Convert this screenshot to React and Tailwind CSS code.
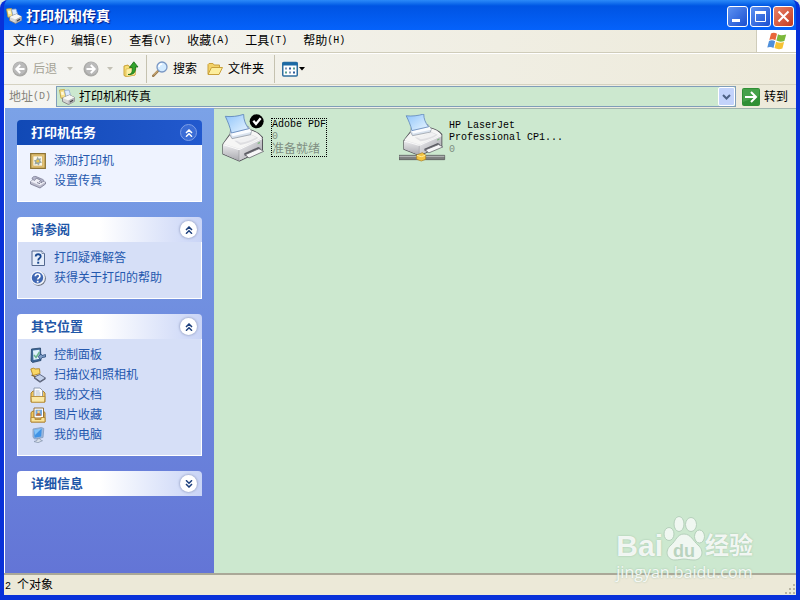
import { useState } from "react";

const latin = "font-['Liberation_Mono',monospace] text-[10px]";

const menus = [
  { label: "文件", key: "F" },
  { label: "编辑", key: "E" },
  { label: "查看", key: "V" },
  { label: "收藏", key: "A" },
  { label: "工具", key: "T" },
  { label: "帮助", key: "H" },
];

/* ---------- small icons ---------- */

const PrintersIcon = () => (
  <svg viewBox="0 0 16 16" className="h-4 w-4 shrink-0">
    <path d="M.5 1l5-.5 1.500 8-5 .8z" fill="#f6e08a" stroke="#b99a3c" strokeWidth=".8" />
    <path d="M2 3l2.500-.3.5 3-2.500.3z" fill="#fff8dc" />
    <path d="M5.500 1.500L10 1l1.700 5.500-4.700 1z" fill="#dcebff" stroke="#8aa4cc" strokeWidth=".7" />
    <path d="M3.500 9l7-3 5 2.500v3.800L9.500 15.500l-6-3z" fill="#d6d6d4" stroke="#77777b" strokeWidth=".8" />
    <path d="M3.500 9l6 2.500 6-3-5-2.500z" fill="#f8f8f5" />
    <path d="M9.500 11.500v4l6-3.300V8.500z" fill="#b0b0b5" />
    <path d="M11 13l3-1.700" stroke="#444" strokeWidth="1.100" />
  </svg>
);

const RoundArrow = ({ flip }) => (
  <svg viewBox="0 0 16 16" className={flip ? "h-4 w-4 -scale-x-100" : "h-4 w-4"}>
    <circle cx="8" cy="8" r="7.500" fill="#a9a9a6" />
    <circle cx="7.600" cy="7.400" r="6.300" fill="#bababa" />
    <path d="M12.500 8H5M8.200 4L4.300 8l3.900 4" fill="none" stroke="#fff" strokeWidth="2" />
  </svg>
);

const Triangle = ({ color }) => (
  <svg viewBox="0 0 6 4" className="h-1 w-1.5">
    <path d="M0 0h6L3 3.500z" fill={color} />
  </svg>
);

const UpIcon = () => (
  <svg viewBox="0 0 16 16" className="h-4 w-4">
    <path d="M1 5l4-1 1 1.500 6-.5v9l-9 1.500-2-1z" fill="#f8df76" stroke="#c49a2a" strokeWidth=".9" />
    <path d="M3 8l10-1.500-1 7.500-9 1.500z" fill="#fdf0a4" stroke="#d1aa3c" strokeWidth=".6" />
    <path d="M5 13.500c4 0 4.500-3 4.200-7H6.500L10.800.8 15 6h-2.500c.3 5-1.500 8-7.500 7.500z" fill="#32a32c" stroke="#146b16" strokeWidth=".8" />
  </svg>
);

const SearchIcon = () => (
  <svg viewBox="0 0 16 16" className="h-4 w-4">
    <path d="M6.500 9.500L1.200 14.800" stroke="#9a7a4c" strokeWidth="2.400" strokeLinecap="round" />
    <path d="M5.800 9.800L1.500 14" stroke="#e6c58b" strokeWidth=".9" />
    <circle cx="10" cy="6" r="5" fill="#d3ebff" stroke="#7b98c4" strokeWidth="1.300" />
    <path d="M7 6c0-2 1.400-3 3.200-3" fill="none" stroke="#fff" strokeWidth="1.500" />
  </svg>
);

const FolderIcon = () => (
  <svg viewBox="0 0 16 16" className="h-4 w-4">
    <path d="M1 13V3.500L2 2.500h4l1.200 1.500H12.500V7" fill="#f3d268" stroke="#c9a03a" />
    <path d="M4.500 6.500H15.500L12 13.500H1z" fill="#fdee9c" stroke="#c9a03a" />
  </svg>
);

const ViewsIcon = () => (
  <svg viewBox="0 0 16 16" className="h-4 w-4">
    <rect x=".75" y="1.500" width="14.500" height="13.500" rx="1" fill="#fff" stroke="#2f6f9f" strokeWidth="1.500" />
    <path d="M.5 1.500h15v3H.5z" fill="#1b6aa5" />
    <path d="M3 6.500h2v2H3zM7 10.500h2v2H7z" fill="#7c93b5" />
    <path d="M7 6.500h2v2H7zM11 10.500h2v2h-2z" fill="#2f5f9e" />
    <path d="M11 6.500h2v2h-2zM3 10.500h2v2H3z" fill="#57a08e" />
  </svg>
);

const WindowsFlag = () => (
  <svg viewBox="0 0 20 18" className="h-[18px] w-5">
    <path d="M4 1.500C6 .4 8 .6 10 1.800L8.400 8.300C6.500 7.200 4.500 7 2.300 8z" fill="#e8663a" />
    <path d="M11 2.200c2 1.200 4.500 1.300 8.200.2L17.400 9c-3 1-5.500.9-8-.4z" fill="#7cb83c" />
    <path d="M2 9c2.200-1 4.200-.8 6.100.3L6.500 16C4.600 14.800 2.600 14.600.3 15.500z" fill="#4f8fdb" />
    <path d="M9.100 9.700c2.300 1.200 5 1.300 8 .4L15.400 16.600c-3 1-5.500.7-7.900-.5z" fill="#f6c234" />
  </svg>
);

const Chevrons = ({ down }) => (
  <svg viewBox="0 0 8 8" className={down ? "h-2 w-2 rotate-180" : "h-2 w-2"}>
    <path d="M1 4l3-3 3 3M1 7.700l3-3 3 3" fill="none" stroke="currentColor" strokeWidth="1.500" />
  </svg>
);

const AddPrinterIcon = () => (
  <svg viewBox="0 0 16 16" className="h-4 w-4">
    <path d="M.7.7h14.600v14.600H.7z" fill="#e3c275" stroke="#8e7436" strokeWidth="1.300" />
    <path d="M3 3h9.500v10H3z" fill="#fbf7e8" stroke="#c9a551" strokeWidth=".6" />
    <path d="M7.700 3.500l1 2.300 2.300-.5-.7 2.500 1.700 1.700-2.500.7-.5 2.300-2-1.500-2.500.5.500-2.500L3.800 7.500l2.400-.7z" fill="#9aa7a1" />
    <circle cx="7.800" cy="8.200" r="1.400" fill="#e8c54c" />
  </svg>
);

const FaxIcon = () => (
  <svg viewBox="0 0 16 16" className="h-4 w-4">
    <path d="M.5 8.500l5-3 10 3.500v2l-5.500 4-9.500-4z" fill="#b9b9ca" stroke="#77778e" strokeWidth=".8" />
    <path d="M.5 8.500l5-3 10 3.500-5.500 3.500z" fill="#ededf5" />
    <path d="M2 6c0-2 2-3 4-2.500l7 3c1.500.8 1 2.500-.5 2.300l-2-.8-.5-1.500-3.500-1.500L4.500 7.500z" fill="#b4b5cb" stroke="#77798f" strokeWidth=".7" />
    <path d="M7 9.500l3 1.200M9 8.500l3 1.200" stroke="#77778e" strokeWidth=".9" />
  </svg>
);

const HelpPageIcon = () => (
  <svg viewBox="0 0 16 16" className="h-4 w-4">
    <path d="M2 1h10l2.500 2.500V15.500H2z" fill="#e5edfa" stroke="#54698f" />
    <path d="M12 1v2.500h2.500" fill="#fff" stroke="#54698f" strokeWidth=".7" />
    <path d="M5.700 6.500c0-3 5-3 5 0 0 2-2.500 1.700-2.500 4" fill="none" stroke="#18478f" strokeWidth="1.800" />
    <path d="M7.200 11.700h2v2h-2z" fill="#18478f" />
  </svg>
);

const HelpRoundIcon = () => (
  <svg viewBox="0 0 16 16" className="h-4 w-4">
    <circle cx="8.600" cy="8.600" r="7.300" fill="#6f7684" />
    <circle cx="7.800" cy="7.800" r="7.200" fill="#eef2fa" />
    <circle cx="7.500" cy="7.800" r="5.700" fill="#3f67b3" />
    <path d="M5.300 6.200c0-3 4.600-2.800 4.600 0 0 1.700-2.200 1.600-2.200 3.400" fill="none" stroke="#fff" strokeWidth="1.700" />
    <path d="M6.800 10.800h1.800v1.700H6.800z" fill="#fff" />
  </svg>
);

const ControlPanelIcon = () => (
  <svg viewBox="0 0 16 16" className="h-4 w-4">
    <path d="M1.500 2l9-1 .5 12.500-8.500 2L1 14z" fill="#3d6698" stroke="#254468" strokeWidth=".8" />
    <path d="M3 3.500l6.500-.7v9L3.500 13z" fill="#dff0fb" />
    <path d="M4 8l2 2.500L9.500 5" fill="none" stroke="#6bb48c" strokeWidth="1.500" />
    <path d="M8 9.500l3-2.500 1 1.500 3.500-1V10l-3.500.5-1.500 2z" fill="#7f9dc7" stroke="#284a78" strokeWidth=".8" />
  </svg>
);

const ScannerIcon = () => (
  <svg viewBox="0 0 16 16" className="h-4 w-4">
    <path d="M.8 2l3-1 1 1 4.700-.3L10 6.500l-7 2z" fill="#f9d765" stroke="#b18427" strokeWidth=".9" />
    <path d="M4 10l6-2.500 5.500 3.500L10 14.500z" fill="#c3d0ea" stroke="#47506b" strokeWidth=".8" />
    <path d="M4 10v1.500L10 15.700l5.500-3.500V11L10 14.500z" fill="#5b6278" />
    <path d="M1.500 8l4 2" stroke="#7d6432" strokeWidth="1.300" />
  </svg>
);

const DocumentsIcon = () => (
  <svg viewBox="0 0 16 16" className="h-4 w-4">
    <path d="M1 6l2-2h10l2 2v9H1z" fill="#f0c861" stroke="#ab8131" />
    <path d="M4 1h6l2.500 2.500V11H4z" fill="#fff" stroke="#8793a8" strokeWidth=".9" />
    <path d="M5.500 4h4M5.500 6h5M5.500 8h5" stroke="#9aabc7" strokeWidth=".8" />
    <path d="M1 9.500h14l-.5 5.700h-13z" fill="#fbe9a6" stroke="#b48b35" strokeWidth=".9" />
  </svg>
);

const PicturesIcon = () => (
  <svg viewBox="0 0 16 16" className="h-4 w-4">
    <path d="M1 5.500L3 4h10l2 1.500V15H1z" fill="#efc65c" stroke="#aa7f2c" />
    <path d="M4 1h9.500v10H4z" fill="#fff" stroke="#94713a" />
    <path d="M5.500 2.700H12v6H5.500z" fill="#75a9df" />
    <path d="M6 8.700c.5-3.500 4.500-3.500 5 0z" fill="#c06e35" />
    <circle cx="8.600" cy="4.800" r="1.400" fill="#f4cf86" />
    <path d="M1 10.500h4v2h6v-2h4V15H1z" fill="#fae49a" stroke="#b48934" strokeWidth=".9" />
  </svg>
);

const ComputerIcon = () => (
  <svg viewBox="0 0 16 16" className="h-4 w-4">
    <path d="M3 2l8.500-1.500 2.300 1-.8 9L4.500 12 3 10z" fill="#9db8dc" stroke="#7f99c0" strokeWidth=".8" />
    <path d="M4 2.700L11.700 1.500l-.5 8L4.500 10.700z" fill="#3f93e6" />
    <path d="M4 2.700l7.700-1.200L5 8z" fill="#86c4f8" />
    <path d="M7 12l3-.5.5 1.500 2 .7-4.500 2-4-1.200 3-1z" fill="#d7dfe9" stroke="#8292aa" strokeWidth=".7" />
  </svg>
);

/* ---------- large printer ---------- */

const Printer = ({ ready, network }) => (
  <svg viewBox="0 0 144 144" className="h-12 w-12 shrink-0">
    <defs>
      <linearGradient id="paper" x1="0" y1="0" x2="1" y2="1">
        <stop offset="0" stopColor="#8fc4fa" />
        <stop offset="1" stopColor="#e9f5ff" />
      </linearGradient>
      <linearGradient id="left" x1="0" y1="0" x2="0" y2="1">
        <stop offset="0" stopColor="#ececee" />
        <stop offset="1" stopColor="#a9a9af" />
      </linearGradient>
      <linearGradient id="right" x1="0" y1="0" x2="1" y2="1">
        <stop offset="0" stopColor="#f1f1f3" />
        <stop offset="1" stopColor="#a3a3aa" />
      </linearGradient>
    </defs>
    <g transform={network ? "translate(9 0) scale(.96 .89)" : "translate(0 1)"}>
      <path d="M6 90L27 60l60-13c15 4 28 10 37 22v38l-69 33L6 119z" fill="#e4e4e6" stroke="#56565c" strokeWidth="4" strokeLinejoin="round" />
      <path d="M6 90l48 15v34L6 118z" fill="url(#left)" />
      <path d="M54 105l69-32v33l-69 33z" fill="url(#right)" />
      <path d="M7 88L29 60l60-12c14 4 26 10 34 22L55 103z" fill="#f6f6f5" />
      <path d="M40 79c21-2 39-8 52-18l20 9c-15 12-34 19-54 22z" fill="#dedee1" />
      <path d="M42 77c20-2 36-7 49-15l15 7c-14 8-29 14-47 16z" fill="#f1f1f2" />
      <path d="M7 91l47 15 70-33" fill="none" stroke="#fff" strokeWidth="2.500" />
      <path d="M54 107v31" stroke="#8c8c92" strokeWidth="1.500" />
      <path d="M26 60l3-14 52-11 10 16-2 10-56 12z" fill="#d8e2ee" stroke="#858b95" strokeWidth="2" strokeLinejoin="round" />
      <path d="M30 57l57-13 4 9-56 13z" fill="#fafcff" />
      <path d="M13 6c19 2 37 0 55-6 0 16 5 30 15 43L31 56C27 37 20 21 13 6z" fill="url(#paper)" stroke="#5b82b8" strokeWidth="2.500" strokeLinejoin="round" />
      <path d="M70 117l42-19 6 3v6l-42 19-6-3z" fill="#5c5c63" />
      <path d="M73 121l41-18 14 8-44 20z" fill="#f7f7f8" stroke="#6a6a71" strokeWidth="2.500" strokeLinejoin="round" />
      <path d="M110 85l7-3v5l-7 3z" fill="#82b884" />
    </g>
    {ready && (
      <>
        <circle cx="107" cy="22" r="21" fill="#000" />
        <path d="M97 20l8 10 14-17" fill="none" stroke="#fff" strokeWidth="7" />
      </>
    )}
    {network && (
      <>
        <path d="M0 124h137v13H0z" fill="#7e8080" stroke="#4c4e4e" strokeWidth="2" />
        <path d="M1 127h135" stroke="#b8bbbb" strokeWidth="3" />
        <path d="M53 123l17-7 10 7v13l-13 5-14-5z" fill="#f3c341" stroke="#a87d22" strokeWidth="2" />
        <path d="M54 124l13 4 12-4" fill="none" stroke="#fff0a0" strokeWidth="3" />
      </>
    )}
  </svg>
);

/* ---------- side panels ---------- */

const panels = [
  {
    title: "打印机任务",
    primary: true,
    items: [
      { text: "添加打印机", Icon: AddPrinterIcon },
      { text: "设置传真", Icon: FaxIcon },
    ],
  },
  {
    title: "请参阅",
    items: [
      { text: "打印疑难解答", Icon: HelpPageIcon },
      { text: "获得关于打印的帮助", Icon: HelpRoundIcon },
    ],
  },
  {
    title: "其它位置",
    items: [
      { text: "控制面板", Icon: ControlPanelIcon },
      { text: "扫描仪和照相机", Icon: ScannerIcon },
      { text: "我的文档", Icon: DocumentsIcon },
      { text: "图片收藏", Icon: PicturesIcon },
      { text: "我的电脑", Icon: ComputerIcon },
    ],
  },
  { title: "详细信息", collapsed: true, items: [] },
];

const Panel = ({ title, primary, collapsed, items }) => {
  const [open, setOpen] = useState(!collapsed);

  return (
    <section>
      <button
        type="button"
        aria-expanded={open}
        onClick={() => setOpen(!open)}
        className={`flex h-[25px] w-full items-center justify-between rounded-t-[4px] pr-[5px] pl-[14px] text-[13px] font-bold ${
          primary
            ? "bg-linear-to-r from-[#1149b5] to-[#2259ce] text-white"
            : "bg-linear-to-r from-white from-45% to-[#c9d4f6] text-[#1f57a8]"
        }`}
      >
        {title}
        <span
          className={`flex h-[17px] w-[17px] items-center justify-center rounded-full ${
            primary
              ? "border border-[#7f9fe6] bg-[#3a6cd6] text-white"
              : "bg-white text-[#1c3f7c] shadow-[0_0_2px_1px_#a9b4d4]"
          }`}
        >
          <Chevrons down={!open} />
        </span>
      </button>
      {open && items.length > 0 && (
        <ul
          className={`border border-t-0 border-white pt-[6px] pb-[10px] pl-3 ${
            primary ? "bg-[#eff3ff]" : "bg-[#d6dff7]"
          }`}
        >
          {items.map(({ text, Icon }) => (
            <li key={text} className="h-5">
              <a href="#" className="flex items-center gap-2 leading-5 text-[#2458ae]">
                <Icon />
                {text}
              </a>
            </li>
          ))}
        </ul>
      )}
    </section>
  );
};

const Watermark = () => (
  <div className="pointer-events-none absolute right-[43px] bottom-[13px] text-white/85">
    <div className="flex items-end font-['Liberation_Sans','Noto_Sans_CJK_SC',sans-serif] font-bold [text-shadow:0_0_2px_#9cbca4]">
      <span className="text-[30px] leading-8">Bai</span>
      <span className="relative h-12 w-[42px]">
        <svg viewBox="0 0 42 48" className="h-12 w-[42px]">
          <g fill="#f0f7f1" stroke="#b5d0bb" strokeWidth="1">
            <ellipse cx="6" cy="20" rx="5" ry="6.500" />
            <ellipse cx="16" cy="10" rx="5" ry="7.500" />
            <ellipse cx="28" cy="10.500" rx="5.500" ry="7" />
            <ellipse cx="36.500" cy="22.500" rx="5" ry="6.500" />
            <path d="M21 20c-7 0-8 7-13 11-7 6-4 15 4 15 4 0 6-1 9-1s5 1 10 1c8 0 11-9 4-15-5-4-7-11-14-11z" />
          </g>
        </svg>
        <span className="absolute inset-x-0 bottom-px text-center text-[18px] leading-5 text-[#b9d3be] [text-shadow:none]">du</span>
      </span>
      <span className="text-2xl leading-8">经验</span>
    </div>
    <div className="font-['Open_Sans',sans-serif] text-base leading-5 [text-shadow:0_0_2px_#9cbca4]">jingyan.baidu.com</div>
  </div>
);

const captionButton =
  "flex h-[21px] w-[21px] items-center justify-center rounded-[3px] border border-white bg-linear-to-br";

const Separator = () => <span className="h-7 w-px bg-[#c5c2b0]" />;

export default function App() {
  return (
    <div className="bg-[#dbe8e6]">
      <div className="flex min-h-screen flex-col overflow-hidden rounded-t-lg border-x-4 border-b-[5px] border-[#0831d9] bg-[#0831d9] font-['Liberation_Sans','Noto_Sans_CJK_SC',sans-serif] text-xs text-black">
        {/* Title bar */}
        <header className="-mx-1 flex h-[30px] items-center gap-1 bg-linear-to-b from-[#2b8af8] via-[#0054e3] via-20% to-[#0562fb] px-[6px] pt-[2px]">
          <PrintersIcon />
          <h1 className="flex-1 text-sm font-bold text-white [text-shadow:1px_1px_1px_#0a1883]">打印机和传真</h1>
          <div className="flex gap-[2px]">
            <button type="button" aria-label="最小化" className={`${captionButton} from-[#5e92f2] to-[#1c4ed0]`}>
              <svg viewBox="0 0 19 19" className="h-[19px] w-[19px]">
                <path d="M4 12h8v3H4z" fill="#fff" />
              </svg>
            </button>
            <button type="button" aria-label="最大化" className={`${captionButton} from-[#5e92f2] to-[#1c4ed0]`}>
              <svg viewBox="0 0 19 19" className="h-[19px] w-[19px]">
                <path d="M4.500 5h10v9.500h-10z" fill="none" stroke="#fff" />
                <path d="M4 4h11v3H4z" fill="#fff" />
              </svg>
            </button>
            <button type="button" aria-label="关闭" className={`${captionButton} from-[#e88168] to-[#c4391c]`}>
              <svg viewBox="0 0 19 19" className="h-[19px] w-[19px]">
                <path d="M4.500 4.500l10 10M14.500 4.500l-10 10" stroke="#fff" strokeWidth="2" />
              </svg>
            </button>
          </div>
        </header>

        {/* Menu bar */}
        <div className="flex h-[23px] border-b border-[#cfccba] bg-linear-to-r from-[#f5f5f2] to-[#edeada]">
          <nav className="flex flex-1 items-center pl-px">
            {menus.map((menu) => (
              <button key={menu.key} type="button" className="flex items-center px-2">
                {menu.label}
                <span className={latin}>({menu.key})</span>
              </button>
            ))}
          </nav>
          <div className="flex w-10 items-center justify-center border-l border-[#cfccba] bg-white">
            <WindowsFlag />
          </div>
        </div>

        {/* Toolbar */}
        <div className="flex h-8 items-center border-t border-b border-t-white border-b-[#d5d2c1] bg-linear-to-r from-[#f5f5f2] to-[#edeada] pl-2">
          <button type="button" className="flex items-center gap-[5px] text-[#a5a397]">
            <RoundArrow />
            后退
          </button>
          <button type="button" aria-label="后退历史" className="px-[10px]">
            <Triangle color="#c3c1b5" />
          </button>
          <button type="button" aria-label="前进" className="pr-2">
            <RoundArrow flip />
          </button>
          <button type="button" aria-label="前进历史" className="pr-[10px]">
            <Triangle color="#c3c1b5" />
          </button>
          <button type="button" aria-label="向上" className="pr-[7px]">
            <UpIcon />
          </button>
          <Separator />
          <button type="button" className="flex items-center gap-[5px] px-[5px]">
            <SearchIcon />
            搜索
          </button>
          <button type="button" className="flex items-center gap-[5px] pr-[10px] pl-[5px]">
            <FolderIcon />
            文件夹
          </button>
          <Separator />
          <button type="button" aria-label="查看方式" className="flex items-center gap-px pl-[7px]">
            <ViewsIcon />
            <Triangle color="#000" />
          </button>
        </div>

        {/* Address bar */}
        <div className="flex h-[23px] items-center bg-linear-to-r from-[#f5f5f2] to-[#edeada] pl-[5px]">
          <label htmlFor="address" className="flex items-center pr-[5px] text-[#85837a]">
            地址<span className={latin}>(D)</span>
          </label>
          <div className="relative flex h-[21px] flex-1 items-center border border-[#7f9db9] bg-[#cce8cf] pl-[2px]">
            <PrintersIcon />
            <select id="address" className="h-full flex-1 appearance-none bg-transparent pl-1 outline-none">
              <option>打印机和传真</option>
            </select>
            <span className="pointer-events-none absolute inset-y-0 right-0 flex w-[17px] items-center justify-center rounded-xs border border-white bg-[#c3d3fb]">
              <svg viewBox="0 0 9 6" className="h-[6px] w-[9px]">
                <path d="M1 1l3.500 3.500L8 1" fill="none" stroke="#4d6185" strokeWidth="2" />
              </svg>
            </span>
          </div>
          <button type="button" className="flex items-center gap-1 pr-2 pl-[6px]">
            <svg viewBox="0 0 18 18" className="h-[18px] w-[18px]">
              <rect width="18" height="18" rx="2" fill="#2f8f35" />
              <path d="M1 1h16v7L1 14z" fill="#55ad58" opacity=".6" />
              <path d="M3 9h11M9 4l5 5-5 5" fill="none" stroke="#fff" strokeWidth="2" />
            </svg>
            转到
          </button>
        </div>

        {/* Folder window */}
        <div className="relative flex flex-1 border-l border-white bg-[#cce8cf]">
          <aside className="flex w-[209px] flex-col gap-[15px] bg-linear-to-b from-[#7ba2e7] to-[#6375d6] px-3 pt-3 pb-4">
            {panels.map((panel) => (
              <Panel key={panel.title} {...panel} />
            ))}
          </aside>

          <main className="flex-1 border-t border-[#9fb5ae] pt-[5px] pl-[7px]">
            <ul className="flex flex-wrap">
              <li className="flex w-[178px] items-start gap-[2px]">
                <Printer ready />
                <div className="mt-1 border border-dotted border-black pb-px">
                  <p className={latin + " leading-3"}>Adobe PDF</p>
                  <p className={latin + " leading-3 text-[#7f8f82]"}>0</p>
                  <p className="leading-3 text-[#7f8f82]">准备就绪</p>
                </div>
              </li>
              <li className="flex w-[178px] items-start gap-[2px]">
                <Printer network />
                <div className="mt-[6px]">
                  <p className={latin + " leading-3"}>HP LaserJet</p>
                  <p className={latin + " leading-3"}>Professional CP1...</p>
                  <p className={latin + " leading-3 text-[#7f8f82]"}>0</p>
                </div>
              </li>
            </ul>
          </main>
        </div>

        {/* Status bar */}
        <footer className="relative flex h-[22px] items-center justify-between border-t-2 border-[#aaa898] bg-[#ece9d8] pl-px">
          <p>
            <span className={latin}>2 </span>个对象
          </p>
          <svg viewBox="0 0 12 12" className="h-3 w-3 self-end">
            <path d="M9 1h2v2H9zM5 5h2v2H5zM9 5h2v2H9zM1 9h2v2H1zM5 9h2v2H5zM9 9h2v2H9z" fill="#b8b4a2" />
          </svg>
          <Watermark />
        </footer>
      </div>
    </div>
  );
}
